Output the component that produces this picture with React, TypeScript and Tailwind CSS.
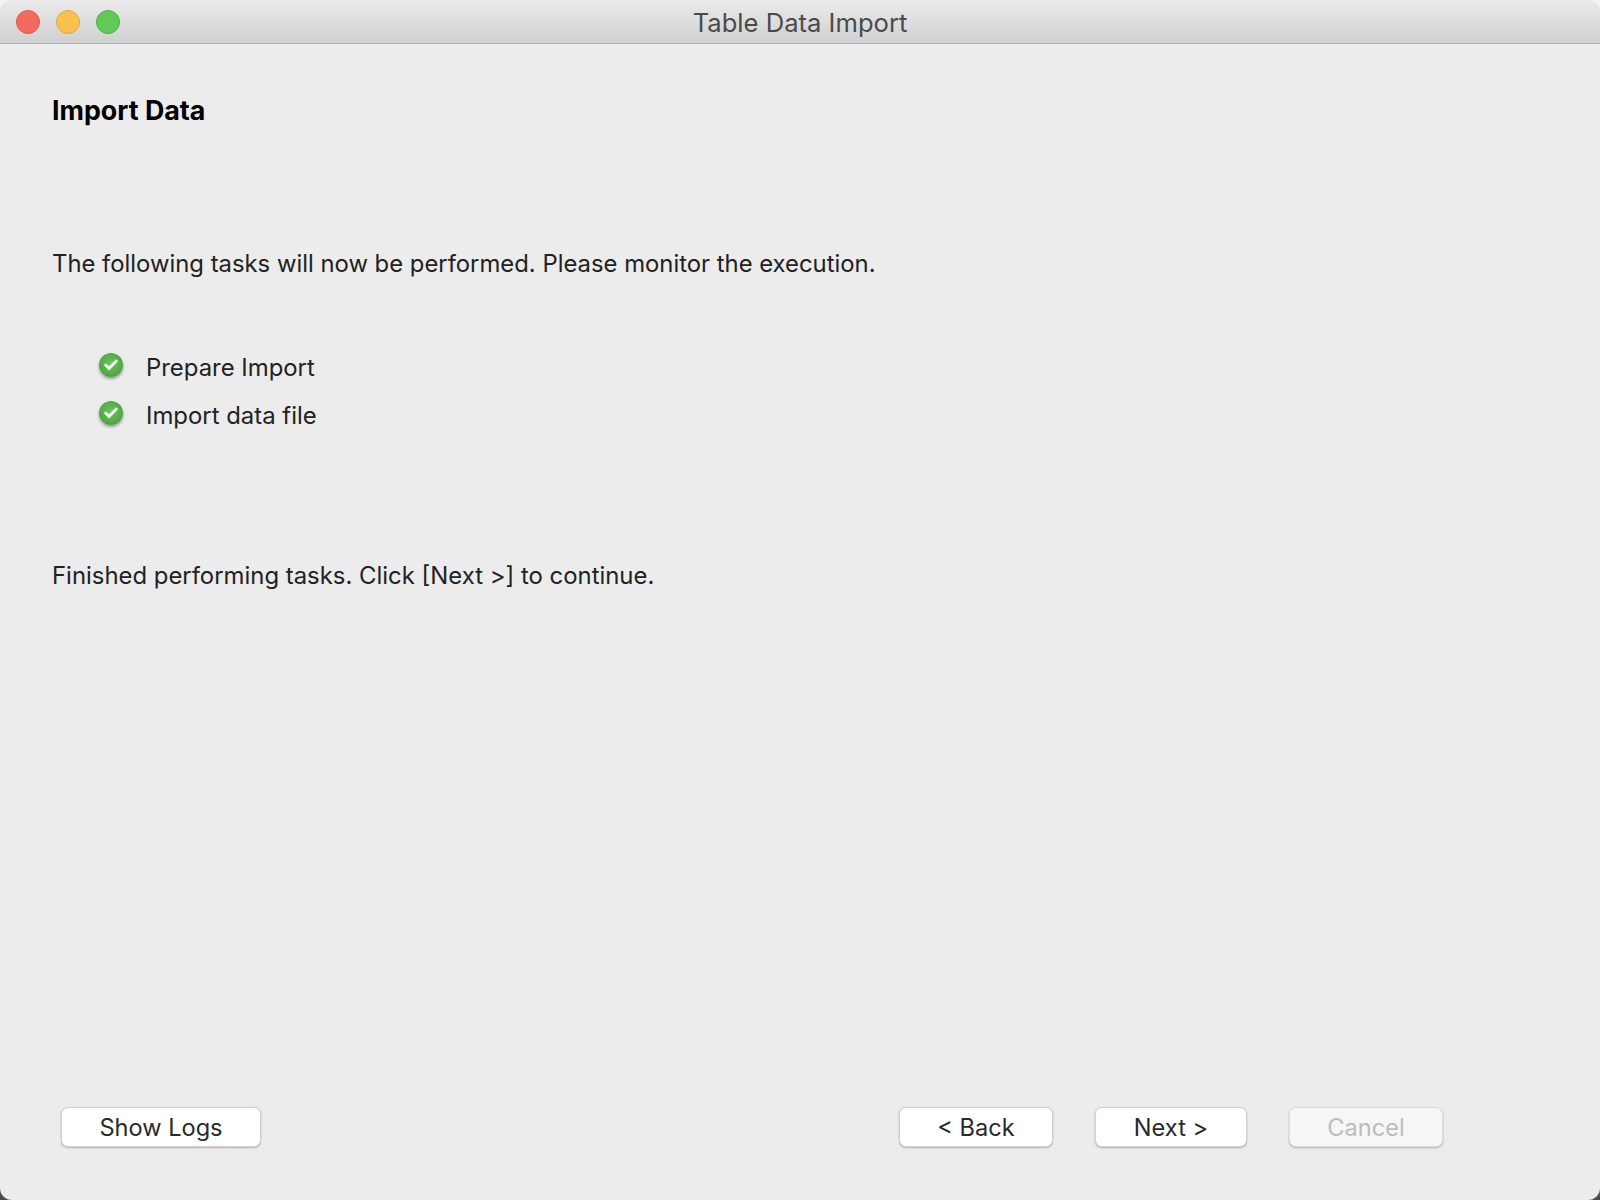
import { Check } from 'lucide-react';

const TASKS = ['Prepare Import', 'Import data file'];

function TrafficLight({ className }: { className: string }) {
  return <span className={`h-6 w-6 rounded-full border ${className}`} />;
}

function DoneIcon() {
  return (
    <span className="-mt-[6px] flex h-6 w-6 items-center justify-center rounded-full bg-[radial-gradient(circle_at_50%_45%,#6cc558_0%,#52ab45_60%,#38802f_100%)] shadow-[0_2px_3px_rgba(0,0,0,0.35)] blur-[0.4px]">
      <Check size={16} strokeWidth={4.5} className="text-[#f4f9f1]" />
    </span>
  );
}

function WizardButton({ label, width, disabled }: { label: string; width: string; disabled?: boolean }) {
  return (
    <button
      type="button"
      disabled={disabled}
      className={`h-10 rounded-[7px] border pt-[1px] text-[23.6px] leading-none shadow-[0_1px_2px_rgba(0,0,0,0.25)] ${width} ${
        disabled ? 'border-[#dcdcdc] bg-[#f6f6f6] text-[#bcbcbc]' : 'border-[#d0d0d0] bg-white text-[#2a2a2a]'
      }`}
    >
      {label}
    </button>
  );
}

export default function App() {
  return (
    <div className="h-[1200px] w-[1600px] bg-gradient-to-b from-[#f4f4f4] from-[90%] to-[#4a4a4a] font-['Inter',sans-serif]">
      <div className="flex h-full flex-col overflow-hidden rounded-[12px] bg-[#ececec]">
        <header className="relative flex h-[44px] shrink-0 items-center justify-center border-b border-[#b0b0b0] bg-gradient-to-b from-[#ebebeb] to-[#d0d0d0] pt-1">
          <div className="absolute left-4 top-[10px] flex gap-4">
            <TrafficLight className="border-[#e0554c] bg-[#f46a61]" />
            <TrafficLight className="border-[#e0a63c] bg-[#f9c14f]" />
            <TrafficLight className="border-[#4eae47] bg-[#60c957]" />
          </div>
          <h1 className="text-[25.6px] text-[#4a4a4a]">Table Data Import</h1>
        </header>

        <main className="flex flex-1 flex-col pl-[52px]">
          <h2 className="mt-[50px] text-[26.8px] font-bold leading-[32px] text-black">Import Data</h2>
          <p className="mt-[122px] text-[23.85px] leading-[32px] text-[#222222]">
            The following tasks will now be performed. Please monitor the execution.
          </p>
          <ul className="mt-[72px] flex flex-col gap-[16px] pl-[47px]">
            {TASKS.map((task) => (
              <li key={task} className="flex h-[32px] items-center gap-[23px] text-[23.9px] text-[#222222]">
                <DoneIcon />
                {task}
              </li>
            ))}
          </ul>
          <p className="mt-[128px] text-[23.9px] leading-[32px] text-[#222222]">
            Finished performing tasks. Click [Next &gt;] to continue.
          </p>
        </main>

        <footer className="flex items-center pb-[53px] pl-[61px]">
          <WizardButton label="Show Logs" width="w-[200px]" />
          <div className="ml-[638px] flex gap-[42px]">
            <WizardButton label="< Back" width="w-[154px]" />
            <WizardButton label="Next >" width="w-[152px]" />
            <WizardButton label="Cancel" width="w-[154px]" disabled />
          </div>
        </footer>
      </div>
    </div>
  );
}
